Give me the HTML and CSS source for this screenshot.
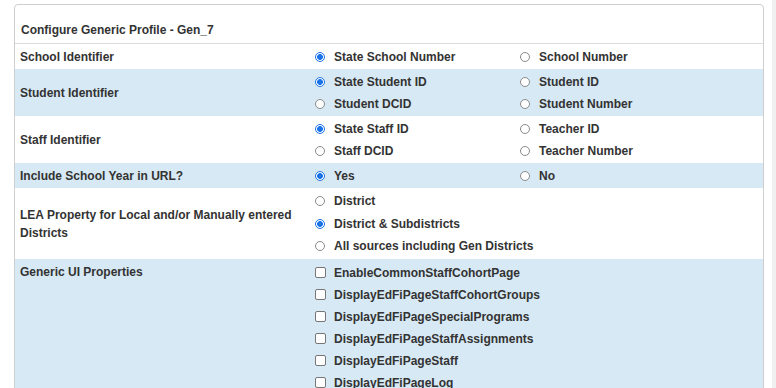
FILE: index.html
```html
<!DOCTYPE html>
<html lang="en">
<head>
    <meta charset="UTF-8">
    <title>Configure Generic Profile</title>
    <link rel="stylesheet" href="styles.css">
</head>
<body>
    <div class="panel">
        <div class="panel-heading">Configure Generic Profile - Gen_7</div>
        <table class="profile-table">
            <tr>
                <td class="prop">School Identifier</td>
                <td class="opts">
                    <div class="opt-grid">
                        <label class="opt"><input type="radio" name="school" checked> State School Number</label>
                        <label class="opt"><input type="radio" name="school"> School Number</label>
                    </div>
                </td>
            </tr>
            <tr class="alt">
                <td class="prop">Student Identifier</td>
                <td class="opts">
                    <div class="opt-grid">
                        <label class="opt"><input type="radio" name="student" checked> State Student ID</label>
                        <label class="opt"><input type="radio" name="student"> Student ID</label>
                        <label class="opt"><input type="radio" name="student"> Student DCID</label>
                        <label class="opt"><input type="radio" name="student"> Student Number</label>
                    </div>
                </td>
            </tr>
            <tr>
                <td class="prop">Staff Identifier</td>
                <td class="opts">
                    <div class="opt-grid">
                        <label class="opt"><input type="radio" name="staff" checked> State Staff ID</label>
                        <label class="opt"><input type="radio" name="staff"> Teacher ID</label>
                        <label class="opt"><input type="radio" name="staff"> Staff DCID</label>
                        <label class="opt"><input type="radio" name="staff"> Teacher Number</label>
                    </div>
                </td>
            </tr>
            <tr class="alt">
                <td class="prop">Include School Year in URL?</td>
                <td class="opts">
                    <div class="opt-grid">
                        <label class="opt"><input type="radio" name="year" checked> Yes</label>
                        <label class="opt"><input type="radio" name="year"> No</label>
                    </div>
                </td>
            </tr>
            <tr class="lea">
                <td class="prop">LEA Property for Local and/or Manually entered Districts</td>
                <td class="opts">
                    <div class="opt-list">
                        <label class="opt"><input type="radio" name="lea"> District</label>
                        <label class="opt"><input type="radio" name="lea" checked> District &amp; Subdistricts</label>
                        <label class="opt"><input type="radio" name="lea"> All sources including Gen Districts</label>
                    </div>
                </td>
            </tr>
            <tr class="alt">
                <td class="prop top">Generic UI Properties</td>
                <td class="opts">
                    <div class="opt-list">
                        <label class="opt"><input type="checkbox"> EnableCommonStaffCohortPage</label>
                        <label class="opt"><input type="checkbox"> DisplayEdFiPageStaffCohortGroups</label>
                        <label class="opt"><input type="checkbox"> DisplayEdFiPageSpecialPrograms</label>
                        <label class="opt"><input type="checkbox"> DisplayEdFiPageStaffAssignments</label>
                        <label class="opt"><input type="checkbox"> DisplayEdFiPageStaff</label>
                        <label class="opt"><input type="checkbox"> DisplayEdFiPageLog</label>
                    </div>
                </td>
            </tr>
        </table>
    </div>
    <div class="scroll-strip"></div>
</body>
</html>
```

FILE: styles.css
```css
html, body {
    height: 100%;
    overflow: hidden;
}
body {
    margin: 0;
    display: flex;
    align-items: flex-start;
    font-family: "Liberation Sans", Arial, sans-serif;
    font-size: 12px;
    font-weight: bold;
    color: #333;
    background: #fff;
}
.panel {
    width: 750px;
    box-sizing: border-box;
    margin: 4px 0 0 14px;
    border: 1px solid #cfcfcf;
    border-radius: 4px;
    background: #fff;
    overflow: hidden;
    flex-shrink: 0;
}
.panel-heading {
    padding: 17px 6px 5px;
    line-height: 16px;
    border-bottom: 1px solid #dcdcdc;
}
.scroll-strip {
    width: 4px;
    height: 100%;
    margin-left: 8px;
    background: #f0f0f0;
}
.profile-table {
    width: 100%;
    border-collapse: collapse;
}
.profile-table td {
    padding: 2px 0 1px;
}
.alt {
    background: #d7e9f4;
}
.prop {
    width: 294px;
    padding-left: 5px !important;
    line-height: 18px;
    vertical-align: middle;
}
.prop.top {
    vertical-align: top;
    padding-top: 4px !important;
}
.opts {
    vertical-align: top;
}
.opt-grid {
    display: grid;
    grid-template-columns: 205px 205px;
}
.opt-list {
    display: flex;
    flex-direction: column;
}
.opt {
    display: flex;
    align-items: center;
    height: 22px;
    white-space: nowrap;
}
.lea .opt {
    height: 22.5px;
}
.alt .opt-list .opt:first-child {
    margin-top: 1px;
}
.opt input {
    appearance: none;
    margin: 0 9px 0 1px;
    background: #fff;
    flex-shrink: 0;
}
.opt input[type="radio"] {
    width: 10px;
    height: 10px;
    border: 1px solid #8a8a8a;
    border-radius: 50%;
    box-sizing: border-box;
}
.opt input[type="radio"]:checked {
    border-color: #1a73e8;
    background: radial-gradient(circle, #1a73e8 0 2.6px, #fff 3.2px);
}
.opt input[type="checkbox"] {
    width: 11px;
    height: 11px;
    border: 1px solid #767676;
    border-radius: 2px;
    box-sizing: border-box;
    margin-right: 8px;
}
```
